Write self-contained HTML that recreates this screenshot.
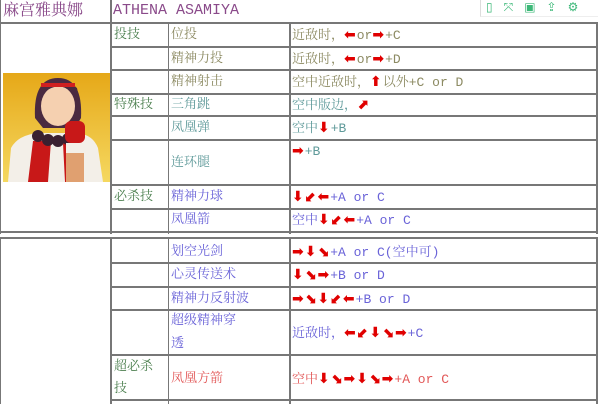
<!DOCTYPE html><html><head><meta charset="utf-8"><style>
body{margin:0;width:600px;height:404px;background:#fff;position:relative;overflow:hidden;font-family:"Liberation Mono","Noto Serif CJK SC",serif;font-size:13px}
.h{position:absolute;background:#777}
.t{position:absolute;white-space:nowrap;line-height:16px}
.g{color:#4d8050}.o{color:#8c8a62}.c{color:#5f9a9a}.b{color:#6a63d8}.r{color:#e25858}
.a{color:#e00000;font-family:"DejaVu Sans",sans-serif;font-weight:bold;font-size:14px;letter-spacing:1px}
</style></head><body>
<div class="t" style="left:3px;top:3px;font-size:16px;color:#8a4a8a;font-family:'Liberation Serif','Noto Serif CJK SC',serif">麻宫雅典娜</div>
<div class="t" style="left:113px;top:3px;font-size:15px;color:#8a4a8a">ATHENA ASAMIYA</div>
<div style="position:absolute;left:480px;top:0;width:117px;height:16px;border-left:1px solid #ddd;border-bottom:1px solid #eee;background:#fff"></div>
<div class="t" style="left:486px;top:-1px;color:#3cb878;font-family:'DejaVu Sans';font-size:12px;letter-spacing:11px">▯⤧▣⇪⚙</div>
<!-- borders -->
<div class="h" style="left:0;top:22px;width:598px;height:2px"></div>
<div class="h" style="left:0;top:0;width:1px;height:234px"></div>
<div class="h" style="left:110px;top:0;width:2px;height:234px"></div>
<div class="h" style="left:168px;top:23px;width:1px;height:211px"></div>
<div class="h" style="left:289px;top:23px;width:2px;height:211px"></div>
<div class="h" style="left:596px;top:23px;width:2px;height:211px"></div>
<div class="h" style="left:111px;top:46px;width:487px;height:2px"></div>
<div class="h" style="left:111px;top:69px;width:487px;height:2px"></div>
<div class="h" style="left:111px;top:93px;width:487px;height:2px"></div>
<div class="h" style="left:111px;top:115px;width:487px;height:2px"></div>
<div class="h" style="left:111px;top:139px;width:487px;height:2px"></div>
<div class="h" style="left:111px;top:184px;width:487px;height:2px"></div>
<div class="h" style="left:111px;top:208px;width:487px;height:2px"></div>
<div class="h" style="left:0;top:231px;width:598px;height:2px"></div>
<div class="h" style="left:0;top:237px;width:598px;height:2px"></div>
<div class="h" style="left:0;top:237px;width:1px;height:167px"></div>
<div class="h" style="left:110px;top:237px;width:2px;height:167px"></div>
<div class="h" style="left:168px;top:237px;width:1px;height:167px"></div>
<div class="h" style="left:289px;top:237px;width:2px;height:167px"></div>
<div class="h" style="left:596px;top:237px;width:2px;height:167px"></div>
<div class="h" style="left:111px;top:262px;width:487px;height:2px"></div>
<div class="h" style="left:111px;top:286px;width:487px;height:2px"></div>
<div class="h" style="left:111px;top:309px;width:487px;height:2px"></div>
<div class="h" style="left:111px;top:354px;width:487px;height:2px"></div>
<div class="h" style="left:111px;top:399px;width:487px;height:2px"></div>
<!-- portrait -->
<svg style="position:absolute;left:3px;top:73px" width="107" height="109" viewBox="0 0 107 109">
<defs><linearGradient id="bg" x1="0" y1="0" x2="0" y2="1"><stop offset="0" stop-color="#e6a818"/><stop offset="1" stop-color="#f5d860"/></linearGradient></defs>
<rect width="107" height="109" fill="url(#bg)"/>
<path d="M32 45 Q30 5 55 5 Q80 5 78 45 L72 55 L40 55Z" fill="#4a2a40"/>
<ellipse cx="55" cy="33" rx="17" ry="20" fill="#f5d0b0"/>
<path d="M36 25 Q55 2 76 25 L74 15 Q55 0 38 15Z" fill="#4a2a40"/>
<rect x="38" y="10" width="34" height="4" fill="#d02020"/>
<path d="M5 109 L8 75 Q15 62 35 60 L75 60 Q90 62 95 75 L100 109Z" fill="#f3efe8"/>
<path d="M25 109 L30 68 L48 68 L45 109Z M62 109 L60 70 L78 72 L80 109Z" fill="#c81818"/>
<circle cx="35" cy="63" r="6" fill="#3a2030"/><circle cx="45" cy="67" r="6" fill="#3a2030"/><circle cx="55" cy="68" r="6" fill="#3a2030"/><circle cx="65" cy="66" r="6" fill="#3a2030"/>
<rect x="62" y="48" width="20" height="22" rx="6" fill="#c81818"/>
<rect x="63" y="70" width="18" height="10" fill="#f3efe8"/>
<rect x="63" y="80" width="18" height="29" fill="#e0a070"/>
</svg>
<!-- table 1 text -->
<div class="t g" style="left:114px;top:27px">投技</div>
<div class="t o" style="left:171px;top:27px">位投</div>
<div class="t o" style="left:292px;top:27px">近敌时，<span class="a">⬅</span>or<span class="a">➡</span>+C</div>
<div class="t o" style="left:171px;top:51px">精神力投</div>
<div class="t o" style="left:292px;top:51px">近敌时，<span class="a">⬅</span>or<span class="a">➡</span>+D</div>
<div class="t o" style="left:171px;top:74px">精神射击</div>
<div class="t o" style="left:292px;top:74px">空中近敌时，<span class="a">⬆</span>以外+C or D</div>
<div class="t g" style="left:114px;top:97px">特殊技</div>
<div class="t c" style="left:171px;top:97px">三角跳</div>
<div class="t c" style="left:292px;top:97px">空中版边，<span class="a">⬈</span></div>
<div class="t c" style="left:171px;top:120px">凤凰弹</div>
<div class="t c" style="left:292px;top:120px">空中<span class="a">⬇</span>+B</div>
<div class="t c" style="left:171px;top:155px">连环腿</div>
<div class="t c" style="left:292px;top:143px"><span class="a">➡</span>+B</div>
<div class="t g" style="left:114px;top:189px">必杀技</div>
<div class="t b" style="left:171px;top:189px">精神力球</div>
<div class="t b" style="left:292px;top:189px"><span class="a">⬇⬋⬅</span>+A or C</div>
<div class="t b" style="left:171px;top:212px">凤凰箭</div>
<div class="t b" style="left:292px;top:212px">空中<span class="a">⬇⬋⬅</span>+A or C</div>
<!-- table 2 -->
<div class="t b" style="left:171px;top:244px">划空光剑</div>
<div class="t b" style="left:292px;top:244px"><span class="a">➡⬇⬊</span>+A or C(空中可)</div>
<div class="t b" style="left:171px;top:267px">心灵传送术</div>
<div class="t b" style="left:292px;top:267px"><span class="a">⬇⬊➡</span>+B or D</div>
<div class="t b" style="left:171px;top:291px">精神力反射波</div>
<div class="t b" style="left:292px;top:291px"><span class="a">➡⬊⬇⬋⬅</span>+B or D</div>
<div class="t b" style="left:171px;top:313px">超级精神穿</div>
<div class="t b" style="left:171px;top:336px">透</div>
<div class="t b" style="left:292px;top:325px">近敌时，<span class="a">⬅⬋⬇⬊➡</span>+C</div>
<div class="t g" style="left:114px;top:359px">超必杀</div>
<div class="t g" style="left:114px;top:381px">技</div>
<div class="t r" style="left:171px;top:371px">凤凰方箭</div>
<div class="t r" style="left:292px;top:371px">空中<span class="a">⬇⬊➡⬇⬊➡</span>+A or C</div>
</body></html>
